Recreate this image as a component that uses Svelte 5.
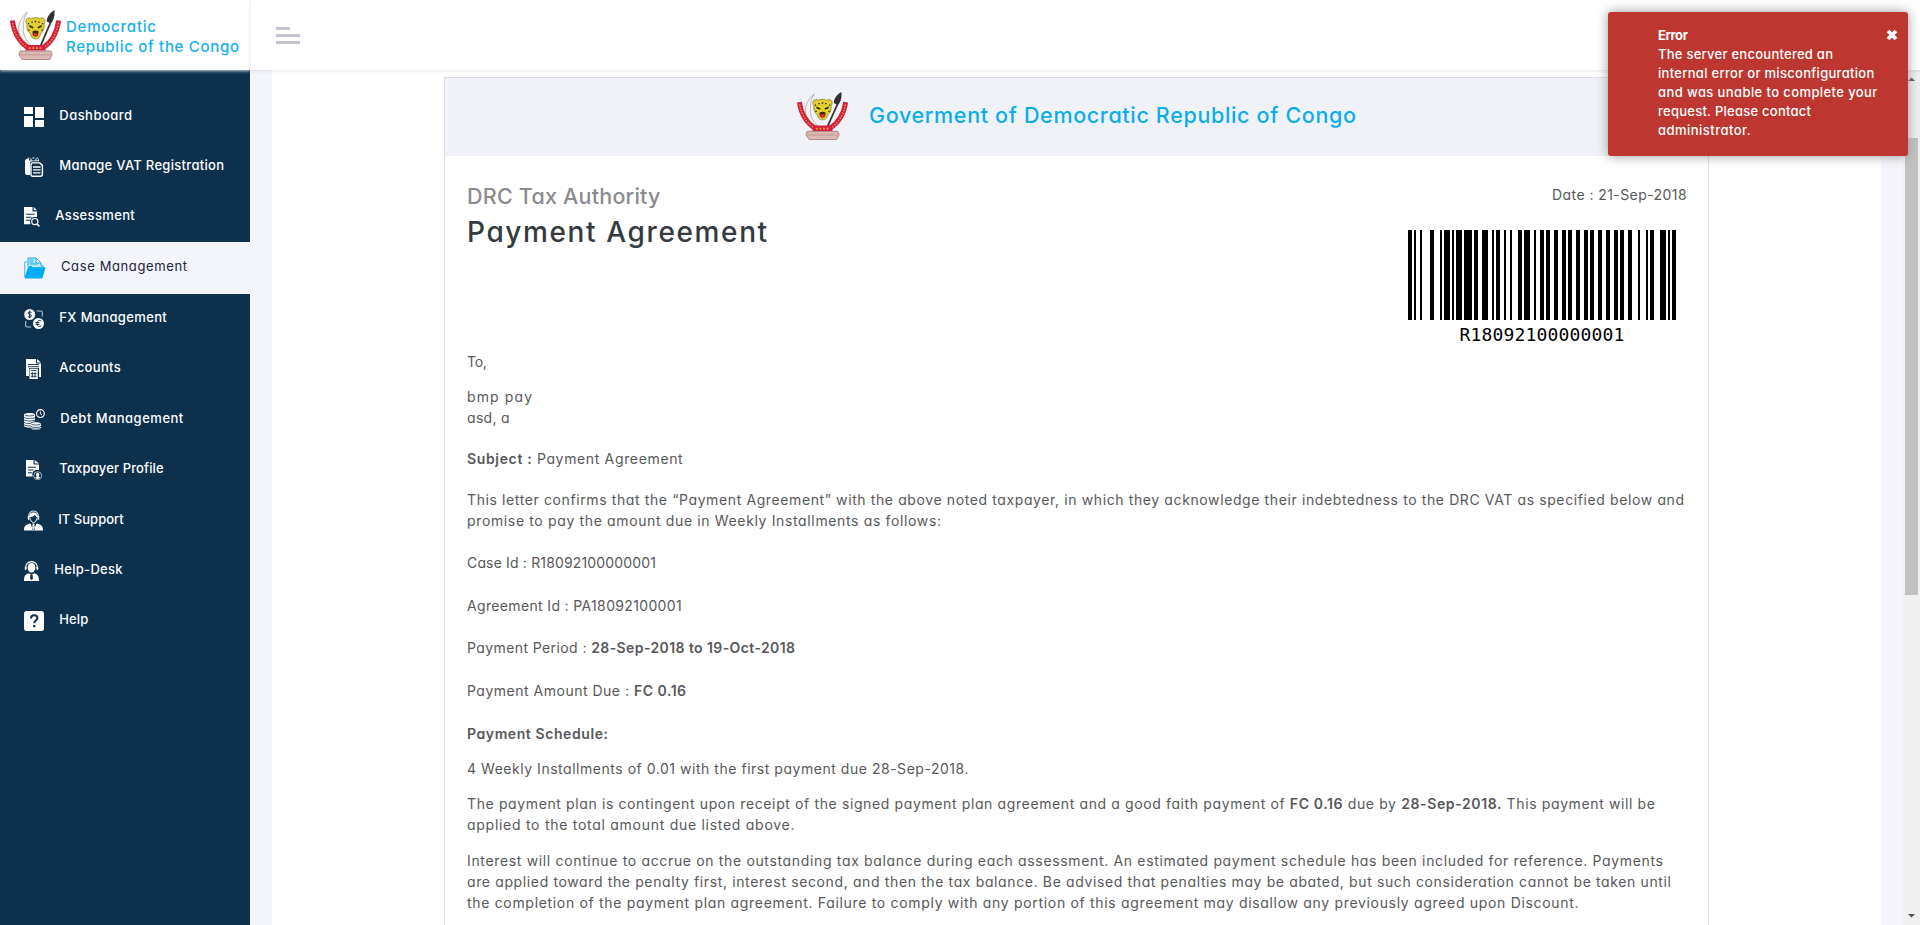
<script>
  const nav = [
    { icon: 'dashboard', w: 20, h: 20, label: 'Dashboard', gap: 15.3, ls: 0.464 },
    { icon: 'vat', w: 20, h: 20, label: 'Manage VAT Registration', gap: 15.3, ls: 0.301 },
    { icon: 'assessment', w: 16, h: 20, label: 'Assessment', gap: 15.3, ls: 0.361 },
    { icon: 'folder', w: 22, h: 22, label: 'Case Management', gap: 15, ls: 0.617, active: true },
    { icon: 'fx', w: 20, h: 20, label: 'FX Management', gap: 15.3, ls: 0.365 },
    { icon: 'accounts', w: 20, h: 20, label: 'Accounts', gap: 15.3, ls: 0.366 },
    { icon: 'debt', w: 21, h: 21, label: 'Debt Management', gap: 15.3, ls: 0.512 },
    { icon: 'taxpayer', w: 20, h: 20, label: 'Taxpayer Profile', gap: 15.3, ls: 0.132 },
    { icon: 'support', w: 19, h: 21, label: 'IT Support', gap: 15.3, ls: 0.021 },
    { icon: 'helpdesk', w: 15, h: 20, label: 'Help-Desk', gap: 15.3, ls: 0.295 },
    { icon: 'help', w: 20, h: 20, label: 'Help', gap: 15.3, ls: 0.12 }
  ];

  const alertLines = [
    ['The server encountered an', 0.258],
    ['internal error or misconfiguration', 0.299],
    ['and was unable to complete your', 0.4],
    ['request. Please contact', 0.253],
    ['administrator.', 0.473]
  ];

  // Each paragraph: space above it, then its lines as runs of text; `b` marks a bold run.
  const letter = [
    { top: 0, lines: [{ ls: -0.3, runs: [{ t: 'To,' }] }] },
    { top: 14, lines: [{ ls: 1.107, runs: [{ t: 'bmp pay' }] }, { ls: 0.324, runs: [{ t: 'asd, a' }] }] },
    { top: 20, lines: [{ ls: 0.65, runs: [{ b: 'Subject :' }, { t: ' Payment Agreement' }] }] },
    {
      top: 20,
      lines: [
        { ls: 0.611, runs: [{ t: 'This letter confirms that the “Payment Agreement” with the above noted taxpayer, in which they acknowledge their indebtedness to the DRC VAT as specified below and' }] },
        { ls: 0.641, runs: [{ t: 'promise to pay the amount due in Weekly Installments as follows:' }] }
      ]
    },
    { top: 21, lines: [{ ls: 0.16, runs: [{ t: 'Case Id : R18092100000001' }] }] },
    { top: 22, lines: [{ ls: 0.348, runs: [{ t: 'Agreement Id : PA18092100001' }] }] },
    { top: 21, lines: [{ ls: 0.404, runs: [{ t: 'Payment Period : ' }, { b: '28-Sep-2018 to 19-Oct-2018' }] }] },
    { top: 22, lines: [{ ls: 0.505, runs: [{ t: 'Payment Amount Due : ' }, { b: 'FC 0.16' }] }] },
    { top: 22, lines: [{ ls: 0.584, runs: [{ b: 'Payment Schedule:' }] }] },
    { top: 14, lines: [{ ls: 0.53, runs: [{ t: '4 Weekly Installments of 0.01 with the first payment due 28-Sep-2018.' }] }] },
    {
      top: 14,
      lines: [
        {
          ls: 0.619,
          runs: [
            { t: 'The payment plan is contingent upon receipt of the signed payment plan agreement and a good faith payment of ' },
            { b: 'FC 0.16' },
            { t: ' due by ' },
            { b: '28-Sep-2018.' },
            { t: ' This payment will be' }
          ]
        },
        { ls: 0.723, runs: [{ t: 'applied to the total amount due listed above.' }] }
      ]
    },
    {
      top: 15,
      lines: [
        { ls: 0.656, runs: [{ t: 'Interest will continue to accrue on the outstanding tax balance during each assessment. An estimated payment schedule has been included for reference. Payments' }] },
        { ls: 0.626, runs: [{ t: 'are applied toward the penalty first, interest second, and then the tax balance. Be advised that penalties may be abated, but such consideration cannot be taken until' }] },
        { ls: 0.68, runs: [{ t: 'the completion of the payment plan agreement. Failure to comply with any portion of this agreement may disallow any previously agreed upon Discount.' }] }
      ]
    }
  ];

  // Code 128: start B, "R", switch to set C, seven digit pairs, checksum, stop.
  const symbols = ['211214', '231131', '113141', '223211', '221213', '213212', '212222', '212222', '212222', '222122', '231311', '2331112'];
  let x = 0;
  const bars = [];
  [...symbols.join('')].forEach((n, i) => {
    const w = Number(n) * 2;
    if (i % 2 === 0) bars.push({ x, w });
    x += w;
  });
</script>

{#snippet crest(w, h)}
  <svg class="crest" width={w} height={h} viewBox="0 0 50 50" preserveAspectRatio="none">
    <path d="M17 2C10 8 7 16 9 24c2 6 6 10 12 12-5-5-8-10-8-17C13 12 14 7 17 2Z" fill="#f4f4f4" stroke="#a9a9a9" stroke-width=".8" />
    <path d="M29.5 37 40 12" stroke="#333" stroke-width="1.8" />
    <path d="M43.500 0c.5 5-.2 10-3.500 13.500l-4-2C36 7 39 3 43.500 0Z" fill="#2f3234" />
    <path d="M2.300 10.500C4 23 9 32 18 38" fill="none" stroke="#d3203f" stroke-width="4.800" />
    <path d="M47.700 10.500C46 23 41 32 32 38" fill="none" stroke="#d3203f" stroke-width="4.800" />
    <path d="M2.600 13C4.500 24 9 32 17 37.500M47.400 13C45.500 24 41 32 33 37.500" fill="none" stroke="#f1a13a" stroke-width="1.300" stroke-dasharray="1.400 1.500" />
    <path d="M16 9.500c1-2 3.500-2 5-.8 2-1.400 6-1.400 8 0 1.500-1.200 4-1.200 5 .8 1 2 0 4-.6 5 .7 4-.8 7-3.400 9.500-.8 3.500-2.500 5-5 5s-4.200-1.500-5-5c-2.600-2.500-4.100-5.500-3.400-9.500-.6-1-1.600-3-.6-5Z" fill="#e3cf2e" stroke="#6f6620" stroke-width=".6" />
    <path d="m19 15 4 2-.5 1.500L19 17Zm12 0-4 2 .5 1.500L31 17ZM21 11.500h1.300v1.300H21Zm3.300-.7h1.400v1.500h-1.400Zm3.300.7H29v1.300h-1.400ZM18 19.500h1.300v1.300H18Zm12.800 0h1.300v1.300h-1.300ZM17.500 13h1.200v1.200h-1.200Zm14 0h1.200v1.200h-1.200Z" fill="#25220f" />
    <path d="M22 21.500c1.500-1.200 4.500-1.200 6 0l-.4 3.800c-1 1.800-4.200 1.800-5.200 0Z" fill="#3b2412" />
    <path d="M23 23.300h4v2.200c-1 1.200-3 1.200-4 0Z" fill="#ef2b2b" />
    <path d="M10 41h30l1.300 3.500L39 49.500H12L8.700 44.500Z" fill="#dcb8b3" stroke="#9b7672" stroke-width=".8" />
    <path d="M9.500 44.800h31" stroke="#b48f8a" stroke-width=".7" />
    <path d="M16.500 35h17l1.500 5.500H15Z" fill="#d3203f" />
    <path d="M18.500 38.200h13" stroke="#f1a13a" stroke-width="1.700" stroke-dasharray="1.800 1.700" />
  </svg>
{/snippet}

{#snippet glyph(name, w, h)}
  <svg class="glyph" width={w} height={h} viewBox="0 0 {w} {h}" fill="#fff">
    {#if name === 'dashboard'}
      <path d="M0 0h9v7H0ZM11 0h9v11h-9ZM0 9h9v11H0ZM11 13h9v7h-9Z" />
    {:else if name === 'vat'}
      <path d="M3 2h2v1.500h1.500V1.500h1v2h4v-2h1v2H14V2c1 .3 1 1 1 2.300H8.500C6.700 4.300 6 5 6 6.500V18H3.500C2 18 1 17.500 1 15.500V4.500C1 3 1.500 2.200 3 2Z" />
      <path d="M3.500 1.200h2M8.500 1h2M12.700 1.200h1.500" stroke="#fff" stroke-width="1" />
      <path fill="none" stroke="#fff" stroke-width="1.400" d="M8.700 5.900h7l2.700 2.500v8.800c0 1.300-.6 2-1.900 2H8.900c-1.300 0-1.900-.7-1.900-2V7.900c0-1.300.5-2 1.700-2Z" />
      <path d="M9 10h7.500M9 12.900h7.500M9 15.800h7.500" stroke="#fff" stroke-width="1.300" />
    {:else if name === 'assessment'}
      <path d="M0 0h8.500v4.500H13V10H9.500a5 5 0 0 0-3 7.300H0ZM9.700 0 13 3.300H9.700Z" />
      <path d="M2 7.300h8.500M2 10.300h5.500M2 13.300h4" stroke="#0d314d" stroke-width="1.100" />
      <circle cx="10.800" cy="14.600" r="3.100" fill="#0d314d" stroke="#fff" stroke-width="1.200" />
      <path d="m13 17 2.400 2.400" stroke="#fff" stroke-width="1.500" />
    {:else if name === 'folder'}
      <path d="M.7 20V5.800c0-.7.300-1 1-1H3" fill="none" stroke="#4cc5f2" stroke-width="1.200" />
      <path d="M4 10V1h8l5 5v3h2v1.500" fill="#bfe8fa" stroke="#15aeea" stroke-width="1" />
      <path d="M12 1v5h5ZM5.500 3h4M5.500 5h4M5.500 7h8.500" fill="#fff" stroke="#15aeea" stroke-width="1" />
      <path d="M4.300 10.600 5.500 9.500h2l1 1.200h12.500L18 21H1Z" fill="#00adef" stroke="#00adef" stroke-width="1" stroke-linejoin="round" />
    {:else if name === 'fx'}
      <circle cx="5.700" cy="5.500" r="5.500" />
      <circle cx="14.500" cy="14.500" r="5.500" />
      <path d="M7.600 3.700C7.200 2.800 4 2.600 4 4.200c0 1.500 3.500 1 3.500 2.700 0 1.500-3.200 1.500-3.700.3M5.700 1.700v7.600M17.300 12.200c-1.500-1.400-4.300-.8-4.300 2.300s2.800 3.700 4.300 2.300M11.500 13.600h4M11.500 15.400h4" fill="none" stroke="#0d314d" stroke-width="1" />
      <path d="M12.500 2h4.300c1 0 1.500.5 1.500 1.500v4M1.700 12v4.500c0 1 .5 1.500 1.500 1.500h4" fill="none" stroke="#b9c5cf" stroke-width="1.100" />
    {:else if name === 'accounts'}
      <path d="M2 0h10v4.500h5V18h-2V9H5v8H2ZM13 0l4 3.500h-4Z" />
      <path d="M4 5.500h11M4 7.700h11" stroke="#0d314d" stroke-width=".9" />
      <path d="M5.500 9.700h8.300V20H5.500Z" />
      <path d="M6.800 11.600h5.800M6.800 14.500h5.800M6.800 17.300h5.800M8.300 13.200v5.500M11 13.200v5.500" stroke="#0d314d" stroke-width=".9" />
    {:else if name === 'debt'}
      <path d="M0 5.500C0 3.500 11 3.500 11 5.500V12l-4 1.500v5C3 19 0 18 0 17Z" />
      <path d="M.8 6c2 1.300 7.400 1.300 9.400 0M0 8.500c2 1.300 9 1.300 11 0M0 11c2 1.300 9 1.300 11 0M0 13.400c2 1.300 5 1.300 7 1M0 15.800c2 1.300 5 1.300 7 1" fill="none" stroke="#0d314d" stroke-width=".8" />
      <path d="M6.700 14.800c0-2.200 10.300-2.200 10.300 0v4.500c0 2.200-10.300 2.200-10.300 0Z" />
      <path d="M7.300 15.200c2 1.200 7 1.200 9 0M6.700 17.400c2 1.500 8.300 1.500 10.300 0M6.700 19.300c2 1.200 8.300 1.200 10.300 0" fill="none" stroke="#0d314d" stroke-width=".8" />
      <circle cx="16.400" cy="4.600" r="3.900" fill="none" stroke="#fff" stroke-width="1.200" />
      <path d="M16.400 2.500v2.300l1.500 1" fill="none" stroke="#fff" stroke-width="1" />
    {:else if name === 'taxpayer'}
      <path d="M2 0h7.500v4.500H15V10h-3.500a4.500 4.500 0 0 0-2.700 6.500H2ZM10.700 0 15 3.500h-4.300Z" />
      <path d="M4 7.300h8M4 10h5.500M4 12.800h4" stroke="#0d314d" stroke-width="1.100" />
      <circle cx="13.700" cy="15.700" r="4" fill="#0d314d" stroke="#c9d3db" stroke-width=".8" />
      <path d="M13.700 12.800c1.300 0 1.700 1 1.600 2-.1.900-.5 1.400-.5 1.900l1.400.9c-1 1.800-4 1.800-5 0l1.400-.9c0-.5-.4-1-.5-1.900-.1-1 .3-2 1.600-2Z" />
    {:else if name === 'support'}
      <path d="M4.600 8c-.5-4 1.500-7 4.900-7s5.400 3 4.900 7" fill="none" stroke="#d5dde3" stroke-width="1.100" />
      <path d="M5.300 7.500C5 4 6.500 2.500 9.500 2.500S14 4 13.700 7.500C12 7 11.500 6 11 5c-1.500 1.500-3.500 2-5.700 2.500ZM3.800 6.300h1.600v3.400H3.800ZM13.600 6.300h1.600v3.400h-1.600Z" />
      <path d="M6 8c.3 2.500 1.700 4.500 3.500 4.500S12.700 10.500 13 8" fill="none" stroke="#fff" stroke-width="1" />
      <path d="M0 20.500c0-4.500 1.500-5.800 6.300-7l3.200 4.500 3.200-4.500c4.800 1.200 6.300 2.500 6.300 7Z" />
      <path d="m7.500 14 1.600 6M11.500 14l-1.600 6" stroke="#0d314d" stroke-width=".8" />
      <path d="m8.600 13.500h1.800l.3 4.500-1.200 1.500L8.300 18Z" />
    {:else if name === 'helpdesk'}
      <path d="M1.700 7.500C1.300 3 4 .7 7.500.7S13.700 3 13.300 7.500" fill="none" stroke="#fff" stroke-width="1.200" />
      <path d="M7.500 2c2.500 0 3.800 1.700 3.800 4.200 0 3-1.500 5.300-3.800 5.300S3.700 9.200 3.700 6.200C3.700 3.700 5 2 7.500 2ZM.8 5.700h1.700v3H.8ZM12.500 5.700h1.700v3h-1.700Z" />
      <path d="M0 20c0-5 1-6.500 4.800-7.700L7.500 14l2.700-1.700C14 13.500 15 15 15 20Z" />
      <path d="M6.500 14h2l.5 3.500L7.500 19 6 17.500Z" fill="#0d314d" />
    {:else}
      <rect width="20" height="20" rx="2.800" />
      <path d="M7 7.500C7 5.500 8.300 4.300 10.200 4.300c1.900 0 3.200 1 3.200 2.700 0 2.500-3.200 2.500-3.200 5.300" fill="none" stroke="#0d314d" stroke-width="2" />
      <path d="M9.100 14h2.200v2.200H9.100Z" fill="#0d314d" />
    {/if}
  </svg>
{/snippet}

<div class="page">
  <aside>
    <div class="brand">
      {@render crest(51, 50)}
      <div class="brand-name">
        <div style:letter-spacing="0.776px">Democratic</div>
        <div style:letter-spacing="0.687px">Republic of the Congo</div>
      </div>
    </div>
    <nav>
      {#each nav as item}
        <a class:active={item.active} style:gap="{item.gap}px">
          {@render glyph(item.icon, item.w, item.h)}
          <span style:letter-spacing="{item.ls}px">{item.label}</span>
        </a>
      {/each}
    </nav>
  </aside>

  <div class="main">
    <header>
      <div class="burger"><i class="short"></i><i></i><i></i></div>
    </header>
    <div class="viewport">
      <div class="sheet">
        <article>
          <div class="doc-head">
            {@render crest(51, 48)}
            <h1>Goverment of Democratic Republic of Congo</h1>
          </div>
          <div class="doc-body">
            <div class="intro">
              <div>
                <h3>DRC Tax Authority</h3>
                <h2>Payment Agreement</h2>
              </div>
              <div class="right">
                <div class="date">Date : 21-Sep-2018</div>
                <div class="barcode">
                  <svg width="268" height="90" viewBox="0 0 268 90" shape-rendering="crispEdges">
                    {#each bars as bar}<rect x={bar.x} width={bar.w} height="90" />{/each}
                  </svg>
                  <div class="code">R18092100000001</div>
                </div>
              </div>
            </div>
            {#each letter as p}
              <p style:margin-top="{p.top}px">
                {#each p.lines as line}
                  <span class="line" style:letter-spacing="{line.ls}px">{#each line.runs as run}{#if run.b}<b>{run.b}</b>{:else}{run.t}{/if}{/each}</span>
                {/each}
              </p>
            {/each}
          </div>
        </article>
      </div>
      <div class="scroll">
        <svg width="17" height="17"><path d="M5 11h7L8.500 7.500Z" fill="#505050" /></svg>
        <div class="track"><div class="thumb"></div></div>
        <svg width="17" height="17"><path d="M5 6h7L8.500 9.500Z" fill="#505050" /></svg>
      </div>
    </div>
  </div>

  <div class="toast">
    <div class="toast-title">Error</div>
    {#each alertLines as [text, ls]}<div style:letter-spacing="{ls}px">{text}</div>{/each}
    <svg class="close" width="12" height="12" viewBox="0 0 12 12"><path d="m2 2 8 8M10 2l-8 8" stroke="#fff" stroke-width="3.800" /></svg>
  </div>
</div>

<style>
  :global(body) { margin: 0; overflow: hidden; }
  .page {
    position: relative;
    display: flex;
    width: 1920px;
    height: 925px;
    overflow: hidden;
    background: #f4f5fa;
    color: #58585a;
    font: 14px/21px Inter, 'Open Sans', sans-serif;
    font-feature-settings: 'cv11';
    white-space: nowrap;
  }
  svg { display: block; flex: none; }
  h1, h2, h3, p { margin: 0; font-weight: 500; }
  p { font-weight: 400; }

  aside { width: 250px; flex: none; background: #0d314d; }
  .brand {
    display: flex;
    align-items: flex-start;
    height: 70px;
    box-sizing: border-box;
    padding: 10px 0 0 10px;
    background: #fff;
    box-shadow: 0 1px 3px #c9d3dc;
  }
  .brand-name {
    padding: 6.500px 0 0 5px;
    color: #14b0ee;
    font-size: 15px;
    line-height: 20px;
    font-weight: 500;
  }
  nav { padding-top: 22px; }
  nav a {
    display: flex;
    align-items: center;
    padding: 15px 0 15px 24px;
    color: #fff;
    font-size: 13px;
    font-weight: 500;
    line-height: 16px;
  }
  nav a span { padding-bottom: 4px; }
  nav a.active { background: #f4f5fa; color: #1c2540; font-weight: 400; }

  .main { flex: 1; min-width: 0; display: flex; flex-direction: column; }
  header {
    position: relative;
    z-index: 1;
    height: 70px;
    flex: none;
    box-sizing: border-box;
    padding: 27px 0 0 26px;
    background: #fff;
    box-shadow: 0 1px 3px rgba(60, 60, 110, .14);
    border-left: 1px solid #f5f5f9;
  }
  .burger { display: flex; flex-direction: column; gap: 4px; width: 24px; margin-left: -1px; }
  .burger i { height: 3px; background: #c4c3cf; }
  .burger .short { width: 14px; }

  .viewport { flex: 1; min-height: 0; display: flex; justify-content: space-between; padding-left: 22px; }
  .sheet { width: 1609px; padding: 7px 172px 0; box-sizing: border-box; background: #fff; }
  article { width: 1265px; height: 848px; box-sizing: border-box; border: 1px solid #dcdde8; border-bottom: 0; }
  .doc-head {
    display: flex;
    height: 78px;
    gap: 21px;
    padding: 14px 0 0 352px;
    box-sizing: border-box;
    background: #f1f2f7;
  }
  .doc-head h1 {
    padding-top: 7px;
    color: #09aeee;
    font-size: 21.500px;
    line-height: 32px;
    letter-spacing: .657px;
  }
  .doc-body { padding: 24px 22px 0; }
  .intro { display: flex; justify-content: space-between; height: 171px; }
  h3 { color: #8b8b90; font-size: 21.500px; line-height: 32px; letter-spacing: .220px; }
  h2 { padding-top: 1px; color: #343a40; font-size: 28px; line-height: 39px; letter-spacing: 1.620px; }
  .right { display: flex; flex-direction: column; align-items: flex-end; padding-top: 4px; }
  .date { margin-right: -1px; letter-spacing: .425px; }
  .barcode { padding: 25px 10px 0 0; }
  .code {
    padding-top: 4px;
    color: #000;
    text-align: center;
    font: 18px/21px 'DejaVu Sans Mono', monospace;
    letter-spacing: .16px;
  }
  .line { display: block; }
  b { font-weight: 600; }

  .scroll { width: 17px; display: flex; flex-direction: column; background: #f0f0f0; }
  .track { flex: 1; padding: 51px 2px 0; }
  .thumb { height: 457px; background: #c1c1c1; }

  .toast {
    position: absolute;
    z-index: 2;
    top: 12px;
    left: 1608px;
    width: 300px;
    height: 144px;
    box-sizing: border-box;
    padding: 14px 15px 15px 50px;
    border-radius: 3px;
    background: #bd3630;
    box-shadow: 0 0 12px #999;
    color: #fff;
    font-size: 13px;
    font-weight: 500;
    line-height: 19px;
  }
  .toast-title { font-weight: 700; letter-spacing: -.383px; }
  .close { position: absolute; top: 17px; right: 10px; }
</style>
